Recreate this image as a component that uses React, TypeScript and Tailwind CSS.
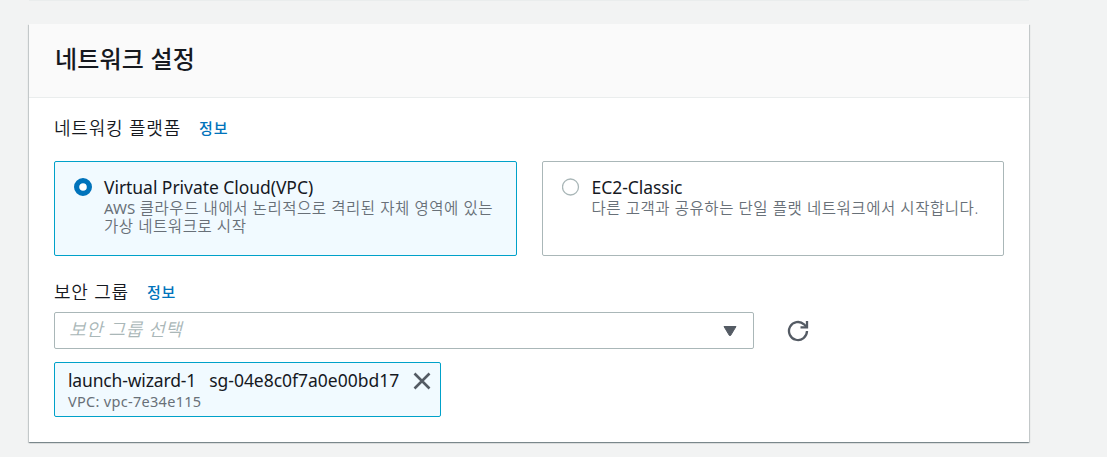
import type { ReactNode } from "react";

const INFO = "text-[15px] leading-5 font-medium tracking-[0.9px] text-[#0073bb]";

function FieldLabel({ children, className }: { children: ReactNode; className: string }) {
  return (
    <div className={`flex h-6 items-center whitespace-nowrap ${className}`}>
      <span className="pb-px text-[18px] leading-6 font-[350] tracking-[0.8px]">{children}</span>
      <a className={INFO}>정보</a>
    </div>
  );
}

function Tile({ selected, title, lines }: { selected?: boolean; title: string; lines: ReactNode[] }) {
  return (
    <div
      className={`flex h-[95px] flex-1 rounded-[2px] border pt-[15px] pl-[19px] ${
        selected ? "border-[#00a1c9] bg-[#f1faff]" : "border-[#aab7b8] bg-white"
      }`}
    >
      <svg className="mt-px mr-3 size-[18px] shrink-0" viewBox="0 0 18 18">
        {selected ? (
          <circle cx="9" cy="9" r="6.4" fill="#fff" stroke="#0073bb" strokeWidth="5.2" />
        ) : (
          <circle cx="8.5" cy="9" r="8" fill="#fff" stroke="#aab7b8" strokeWidth="1.3" />
        )}
      </svg>
      <div className="whitespace-nowrap">
        <div className="h-[22px] text-[17.5px] leading-[20px] tracking-[-0.05px]">{title}</div>
        <div className="text-[15.5px] leading-[18px] font-[350] tracking-[0.55px] text-[#687078]">
          {lines.map((line, i) => (
            <div key={i} className="h-[18px]">
              {line}
            </div>
          ))}
        </div>
      </div>
    </div>
  );
}

export default function App() {
  return (
    <div className="h-[457px] w-full overflow-hidden bg-[#f2f3f3] pl-[29px] font-['Noto_Sans','Noto_Sans_CJK_KR',sans-serif] text-[#16191f]">
      <div className="h-px w-[1000px] bg-[#eaeded]" />
      <section className="mt-[23px] h-[418px] w-[1000px] bg-white shadow-[0_1px_1px_0_rgba(0,28,36,0.3),1px_1px_1px_0_rgba(0,28,36,0.15),-1px_1px_1px_0_rgba(0,28,36,0.15)]">
        <header className="flex h-[74px] items-center border-b border-[#eaeded] bg-[#fafafa] pb-[3px] pl-[26px]">
          <h2 className="text-[24px] leading-8 font-medium tracking-[0.2px]">네트워크 설정</h2>
        </header>
        <div className="px-[25px] pt-[18px]">
          <FieldLabel className="gap-[18px]">네트워킹 플랫폼</FieldLabel>
          <div className="mt-[21px] flex gap-[25px]">
            <Tile
              selected
              title="Virtual Private Cloud(VPC)"
              lines={[
                <>
                  <span className="text-[15px] font-normal tracking-normal">AWS</span> 클라우드 내에서 논리적으로 격리된 자체 영역에 있는
                </>,
                "가상 네트워크로 시작",
              ]}
            />
            <Tile title="EC2-Classic" lines={["다른 고객과 공유하는 단일 플랫 네트워크에서 시작합니다."]} />
          </div>
          <FieldLabel className="mt-6 gap-[18px]">보안 그룹</FieldLabel>
          <div className="mt-2 flex items-center">
            <div className="flex h-[37px] w-[700px] items-center justify-between rounded-[2px] border border-[#aab7b8] pr-4 pl-[14px]">
              <span className="pb-1 text-[18px] leading-6 font-[350] tracking-[0.6px] text-[#aab7b8] italic">보안 그룹 선택</span>
              <svg className="size-[14px]" viewBox="0 0 14 14">
                <path d="M1 2.5h12L7.6 11.5H6.4z" fill="#545b64" stroke="#545b64" strokeLinejoin="round" />
              </svg>
            </div>
            <svg className="ml-[33px] size-[22px]" viewBox="0 0 22 22" fill="none" stroke="#545b64" strokeWidth="2.3">
              <path d="M20 11a9 9 0 1 1-3-6.7L19.6 7" />
              <path d="M20 1v6.4h-6.5" />
            </svg>
          </div>
          <div className="mt-[13px] flex h-[55px] w-[387px] justify-between rounded-[2px] border border-[#00a1c9] bg-[#f1faff] pr-[9px] pl-[13px]">
            <div className="pt-[7px] whitespace-nowrap">
              <div className="flex h-[22px] gap-[13px] text-[17.5px] leading-[20px]">
                <span className="tracking-[-0.15px]">launch-wizard-1</span>
                <span className="tracking-[-0.02px]">sg-04e8c0f7a0e00bd17</span>
              </div>
              <div className="text-[14.5px] leading-[18px] tracking-[0.3px] text-[#687078]">VPC: vpc-7e34e115</div>
            </div>
            <svg className="mt-[9px] size-[18px]" viewBox="0 0 18 18" stroke="#545b64" strokeWidth="2.6">
              <path d="m1.5 1.5 15 15m0-15-15 15" />
            </svg>
          </div>
        </div>
      </section>
    </div>
  );
}
